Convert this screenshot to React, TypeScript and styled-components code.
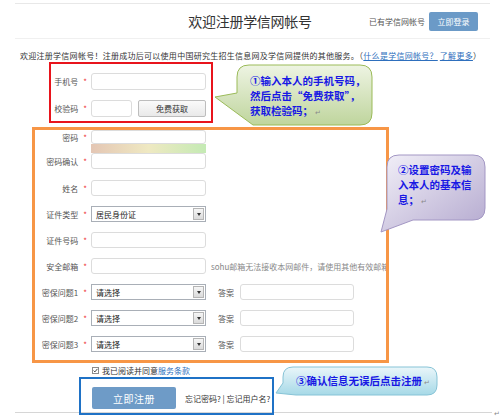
import { FC, ReactNode } from "react";
import styled, { createGlobalStyle } from "styled-components";

const GlobalStyle = createGlobalStyle`
  html, body {
    margin: 0;
    padding: 0;
    background: #fff;
  }

  body {
    font-family: "Noto Sans CJK SC", "Noto Sans", sans-serif;
    color: #444;
  }

  * {
    box-sizing: border-box;
  }
`;

const Page = styled.div`
  position: relative;
  width: 500px;
  height: 418px;
  overflow: hidden;
  background: #fff;
  padding-top: 3px;
`;

const Rule = styled.div<{ $color: string }>`
  height: 1px;
  margin: 0 10px 0 15px;
  background: ${(p) => p.$color};
`;

/* ページ上部 */
const Header = styled.header`
  display: grid;
  grid-template-columns: 1fr auto 1fr;
  align-items: center;
  height: 34px;
`;

const Title = styled.h1`
  grid-column: 2;
  margin: 0;
  font-size: 14px;
  font-weight: 400;
  letter-spacing: -0.3px;
  color: #333;
`;

const HeaderRight = styled.div`
  justify-self: end;
  display: flex;
  align-items: center;
  gap: 4px;
  padding-right: 22px;
  font-size: 8px;
  color: #555;
`;

const LoginButton = styled.button`
  width: 49px;
  height: 19px;
  padding: 0;
  border: none;
  border-radius: 2px;
  background: #6b9ac7;
  color: #fff;
  font-family: inherit;
  font-size: 8px;
`;

const Intro = styled.p`
  margin: 0;
  padding: 10px 0 0 20px;
  height: 23px;
  font-size: 8px;
  line-height: 13px;
  letter-spacing: 0.27px;
  white-space: nowrap;
  color: #333;
`;

const Link = styled.a`
  color: #2e6fbd;
  text-decoration: underline;
`;

/* 注釈の枠 */
const RedBox = styled.section`
  display: flex;
  flex-direction: column;
  gap: 10px;
  width: 164px;
  margin-left: 49px;
  padding: 9px 0 4px;
  border: 2px solid #e8141c;
`;

const OrangeBox = styled.section`
  width: 357px;
  margin: 4px 0 0 32px;
  padding-bottom: 8px;
  border: 3px solid #f79646;
  overflow: hidden;
`;

const PasswordGroup = styled.div`
  display: flex;
  flex-direction: column;
`;

const Fields = styled.div`
  display: flex;
  flex-direction: column;
  gap: 10px;
  margin-top: 11px;
`;

const Row = styled.div<{ $h: number }>`
  display: flex;
  align-items: center;
  height: ${(p) => p.$h}px;
`;

const Label = styled.span<{ $w: number }>`
  flex: none;
  width: ${(p) => p.$w}px;
  margin-right: 4px;
  text-align: right;
  font-size: 8px;
  color: #555;
  white-space: nowrap;
`;

const Star = styled.span`
  margin-left: 5px;
  color: #e33;
`;

const TextInput = styled.input<{ $w: number; $h: number }>`
  flex: none;
  width: ${(p) => p.$w}px;
  height: ${(p) => p.$h}px;
  margin: 0;
  padding: 0;
  border: 1px solid #dcdcdc;
  border-radius: 3px;
  background: #fff;
  outline: none;
`;

const StrengthBar = styled.div`
  width: 115px;
  height: 9px;
  background: linear-gradient(90deg, #e4c6b4, #efe9c2 50%, #c4eab4);
`;

const GetCodeButton = styled.button`
  width: 68px;
  height: 17px;
  margin-left: 6px;
  padding: 0;
  border: 1px solid #bdbdbd;
  border-radius: 2px;
  background: linear-gradient(#fafafa, #e9e9e9);
  font-family: inherit;
  font-size: 8px;
  color: #333;
`;

const SelectBox = styled.div`
  flex: none;
  display: flex;
  align-items: center;
  justify-content: space-between;
  width: 115px;
  height: 16px;
  padding-left: 4px;
  border: 1px solid #a9afb7;
  background: #fff;
  font-size: 8px;
  color: #222;
`;

const SelectArrow = styled.span`
  display: flex;
  align-items: center;
  justify-content: center;
  width: 11px;
  height: 12px;
  margin-right: 1px;
  border: 1px solid #b5b5b5;
  background: linear-gradient(#f6f6f6, #dadada);

  &::after {
    content: "";
    border-left: 2px solid transparent;
    border-right: 2px solid transparent;
    border-top: 3px solid #333;
  }
`;

const Hint = styled.span`
  margin-left: 5px;
  font-size: 8px;
  color: #888;
  white-space: nowrap;
`;

const AnswerLabel = styled.span`
  margin: 0 6px 0 12px;
  font-size: 8px;
  color: #555;
`;

const AgreeRow = styled.div`
  display: flex;
  align-items: center;
  gap: 3px;
  height: 14px;
  padding-left: 92px;
  font-size: 8px;
  color: #333;
`;

const TermsLink = styled.span`
  color: #2e6fbd;
`;

const BlueBox = styled.section`
  position: relative;
  z-index: 1;
  display: flex;
  align-items: flex-start;
  width: 195px;
  height: 38px;
  margin-left: 79px;
  padding: 8px 0 4px 11px;
  border: 2px solid #1f72c6;
`;

const RegisterButton = styled.button`
  width: 84px;
  height: 22px;
  padding: 0;
  border: none;
  border-radius: 2px;
  background: #6e9bc7;
  color: #fff;
  font-family: inherit;
  font-size: 10px;
  letter-spacing: 0.5px;
`;

const ForgotLinks = styled.span`
  align-self: center;
  margin-left: 9px;
  font-size: 8px;
  color: #333;
  white-space: nowrap;
`;

const Footer = styled.div`
  display: flex;
  align-items: center;
  height: 1px;
  margin: -3px 0 0 15px;
`;

const FooterLine = styled.div`
  flex: 1;
  height: 1px;
  background: #d6d6d6;
`;

const ReturnMark = styled.span`
  margin-left: 2px;
  font-size: 7px;
  font-weight: 400;
  color: #8a8a8a;
`;

/* 吹き出し */
const BubbleFrame = styled.div<{ $left: number; $top: number; $w: number; $h: number }>`
  position: absolute;
  left: ${(p) => p.$left}px;
  top: ${(p) => p.$top}px;
  width: ${(p) => p.$w}px;
  height: ${(p) => p.$h}px;

  & > svg {
    position: absolute;
    inset: 0;
  }
`;

const BubbleText = styled.div<{ $pad: string }>`
  position: relative;
  padding: ${(p) => p.$pad};
  font-size: 10.5px;
  font-weight: 700;
  line-height: 15px;
  color: #1818e4;
  white-space: nowrap;
`;

type BubbleProps = {
  id: string;
  left: number;
  top: number;
  w: number;
  h: number;
  path: string;
  from: string;
  to: string;
  stroke: string;
  diagonal?: boolean;
  pad: string;
  children: ReactNode;
};

const Bubble: FC<BubbleProps> = (props) => (
  <BubbleFrame $left={props.left} $top={props.top} $w={props.w} $h={props.h}>
    <svg width={props.w} height={props.h} viewBox={`0 0 ${props.w} ${props.h}`}>
      <defs>
        <linearGradient id={props.id} x1="0" y1="0" x2={props.diagonal ? "1" : "0"} y2="1">
          <stop offset="0" stopColor={props.from} />
          <stop offset="1" stopColor={props.to} />
        </linearGradient>
      </defs>
      <path d={props.path} fill={`url(#${props.id})`} stroke={props.stroke} strokeWidth="1" />
    </svg>
    <BubbleText $pad={props.pad}>{props.children}</BubbleText>
  </BubbleFrame>
);

const Required: FC<{ w: number; children: ReactNode }> = (props) => (
  <Label $w={props.w}>
    {props.children}
    <Star>*</Star>
  </Label>
);

const Select: FC<{ value: string }> = (props) => (
  <SelectBox>
    {props.value}
    <SelectArrow />
  </SelectBox>
);

const CheckMark: FC = () => (
  <svg width="7" height="7" viewBox="0 0 7 7">
    <rect x="0.5" y="0.5" width="6" height="6" fill="#fff" stroke="#8c8c8c" />
    <path d="M1.6 3.6 L2.9 4.9 L5.4 1.9" fill="none" stroke="#333" strokeWidth="0.9" />
  </svg>
);

const L = 52;

export default function App() {
  return (
    <>
      <GlobalStyle />
      <Page>
        <Rule $color="#e8e8e8" />
        <Header>
          <Title>欢迎注册学信网帐号</Title>
          <HeaderRight>
            已有学信网帐号
            <LoginButton>立即登录</LoginButton>
          </HeaderRight>
        </Header>
        <Rule $color="#f0f0f0" />
        <Intro>
          欢迎注册学信网帐号！注册成功后可以使用中国研究生招生信息网及学信网提供的其他服务。（
          <Link>什么是学信网帐号？</Link> <Link>了解更多</Link>）
        </Intro>

        <RedBox>
          <Row $h={17}>
            <Required w={36}>手机号</Required>
            <TextInput $w={115} $h={17} readOnly />
          </Row>
          <Row $h={17}>
            <Required w={36}>校验码</Required>
            <TextInput $w={41} $h={17} readOnly />
            <GetCodeButton>免费获取</GetCodeButton>
          </Row>
        </RedBox>

        <OrangeBox>
          <PasswordGroup>
            <Row $h={14}>
              <Required w={L}>密码</Required>
              <TextInput $w={115} $h={14} readOnly />
            </Row>
            <Row $h={9}>
              <Label $w={L} />
              <StrengthBar />
            </Row>
            <Row $h={16}>
              <Required w={L}>密码确认</Required>
              <TextInput $w={115} $h={16} readOnly />
            </Row>
          </PasswordGroup>
          <Fields>
            <Row $h={16}>
              <Required w={L}>姓名</Required>
              <TextInput $w={115} $h={16} readOnly />
            </Row>
            <Row $h={16}>
              <Required w={L}>证件类型</Required>
              <Select value="居民身份证" />
            </Row>
            <Row $h={16}>
              <Required w={L}>证件号码</Required>
              <TextInput $w={115} $h={16} readOnly />
            </Row>
            <Row $h={16}>
              <Required w={L}>安全邮箱</Required>
              <TextInput $w={115} $h={16} readOnly />
              <Hint>sohu邮箱无法接收本网邮件，请使用其他有效邮箱</Hint>
            </Row>
            {[1, 2, 3].map((n) => (
              <Row $h={16} key={n}>
                <Required w={L}>{`密保问题${n}`}</Required>
                <Select value="请选择" />
                <AnswerLabel>答案</AnswerLabel>
                <TextInput $w={114} $h={16} readOnly />
              </Row>
            ))}
          </Fields>
        </OrangeBox>

        <AgreeRow>
          <CheckMark />
          <span>
            我已阅读并同意<TermsLink>服务条款</TermsLink>
          </span>
        </AgreeRow>

        <BlueBox>
          <RegisterButton>立即注册</RegisterButton>
          <ForgotLinks>忘记密码? | 忘记用户名?</ForgotLinks>
        </BlueBox>

        <Footer>
          <FooterLine />
          <ReturnMark>↵</ReturnMark>
        </Footer>

        <Bubble
          id="g1"
          left={213}
          top={63}
          w={162}
          h={65}
          path="M36 2 H147 Q159 2 159 14 V50 Q159 62 147 62 H40 L2 34 L24 30 V14 Q24 2 36 2 Z"
          from="#eef4e3"
          to="#bfd59d"
          stroke="#9bbb59"
          pad="10px 0 0 37px"
        >
          ①输入本人的手机号码，
          <br />
          然后点击“免费获取”，
          <br />
          获取检验码；<ReturnMark>↵</ReturnMark>
        </Bubble>

        <Bubble
          id="g2"
          left={378}
          top={153}
          w={110}
          h={82}
          path="M21 2 H95 Q107 2 107 14 V55 Q107 67 95 67 H35 L3 79 L9 56 V14 Q9 2 21 2 Z"
          from="#f2f0f8"
          to="#b4a9cf"
          stroke="#a397c4"
          diagonal
          pad="9px 0 0 20px"
        >
          ②设置密码及输
          <br />
          入本人的基本信
          <br />
          息；<ReturnMark>↵</ReturnMark>
        </Bubble>

        <Bubble
          id="g3"
          left={274}
          top={365}
          w={166}
          h={32}
          path="M19 2 H153 Q163 2 163 12 V20 Q163 30 153 30 H22 L2 28 L9 18 V12 Q9 2 19 2 Z"
          from="#eaf6fa"
          to="#a6d9e7"
          stroke="#86c3d6"
          pad="8px 0 0 22px"
        >
          ③确认信息无误后点击注册<ReturnMark>↵</ReturnMark>
        </Bubble>
      </Page>
    </>
  );
}
